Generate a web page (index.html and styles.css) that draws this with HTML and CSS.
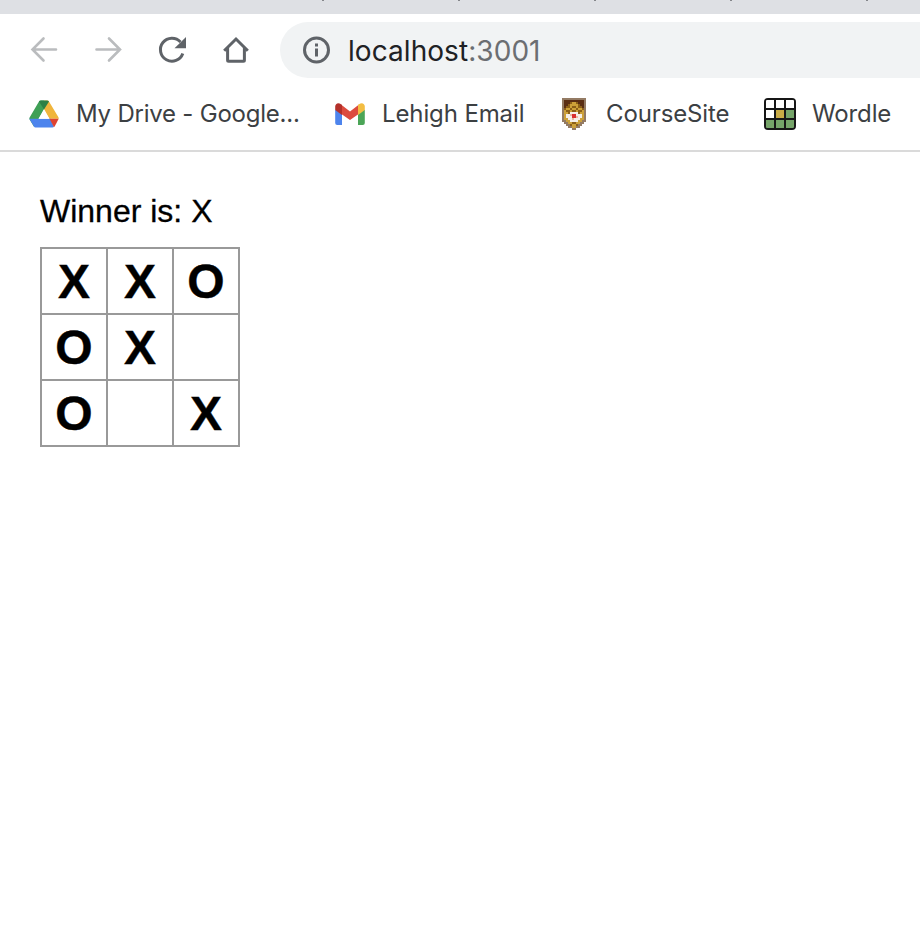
FILE: index.html
```html
<!DOCTYPE html>
<html lang="en">
<head>
<meta charset="utf-8">
<title>Tic Tac Toe</title>
<link rel="stylesheet" href="styles.css">
</head>
<body>
<div class="tabstrip"><i></i><i></i><i></i><i></i><i></i></div>
<header class="toolbar">
  <nav class="controls">
    <svg class="muted" width="28" height="28" viewBox="0 0 28 28"><path d="M26 13.500H2.500M13.500 2.500l-11 11 11 11"/></svg>
    <svg class="muted" width="28" height="28" viewBox="0 0 28 28"><path d="M2.500 13.500H26M15 2.500l11 11-11 11"/></svg>
    <svg class="strong" width="28" height="28" viewBox="0 0 28 28"><path d="M24.800 17.500A11.500 11.500 0 1 1 22.500 6"/><path class="solid" d="M28 1v11.200H16.500z"/></svg>
    <svg class="strong" width="28" height="28" viewBox="0 0 28 28"><path d="M2.200 14.800L14 3l11.800 11.800"/><path d="M5.600 12v12.300q0 1 1 1h14.800q1 0 1-1V12"/></svg>
  </nav>
  <div class="address">
    <svg class="info" width="28" height="28" viewBox="0 0 28 28"><circle cx="14.500" cy="14" r="12"/><path d="M14.500 12.600v8M14.500 7.500v3"/></svg>
    <span class="url">localhost<span class="port">:3001</span></span>
  </div>
</header>
<nav class="bookmarks">
  <a class="bookmark drive">
    <svg width="30" height="28" viewBox="0 0 30 28"><path fill="#3fa056" d="M10 1.500Q10.500.5 12 .5h3v8.500L5 26.800.6 19.500Q0 18.500.6 17.500z"/><path fill="#f0b53c" d="M15 .5h3q1.500 0 2 1L29.300 17q.6 1 .4 1.700H20.500L15 9z"/><path fill="#2c8045" d="M10 1.500Q10.500.5 12 .5h6q1.500 0 2 1L15 9.500z"/><path fill="#4d84ed" d="M.3 18.700H21.500L25 27.100q-.7.400-1.500.400H6.500Q5.500 27.500 4.800 26.300z"/><path fill="#de4332" d="M20.500 18.700h9.200L25.800 26.200q-.4.700-.9.900z"/><path fill="#fff" d="M15 9.800L20.200 18.700H9.800z"/></svg>
    <span>My Drive - Google...</span>
  </a>
  <a class="bookmark gmail">
    <svg width="30" height="22" viewBox="0 0 30 22"><path fill="#4d84ed" d="M.2 7H7v15H2.200q-2 0-2-2z"/><path fill="#4ba557" d="M23 7h6.800v13q0 2-2 2H23z"/><path fill="#dc4b3e" d="M6 1.500l9 7 9-7v9.300L15 17 6 10.800z"/><path fill="#b3302a" d="M.2 7V3.500C.2.500 3.300-.8 6 1.200L7 2v10z"/><path fill="#f3bd42" d="M29.800 7V3.500c0-3-3.100-4.300-5.800-2.300l-1 .8V12z"/></svg>
    <span>Lehigh Email</span>
  </a>
  <a class="bookmark course">
    <svg class="crest" width="24" height="32" viewBox="0 0 12 16"><path stroke="#947b64" d="M0 .5h12M0 1.500h1M11 1.500h1M0 2.500h1M11 2.500h1M0 3.500h1M11 3.500h1M0 4.500h1M11 4.500h1M0 5.500h1M11 5.500h1M0 6.500h1M11 6.500h1M0 7.500h1M11 7.500h1M0 8.500h1M11 8.500h1M0 9.500h1M11 9.500h1M0 10.500h1M11 10.500h1M0 11.500h2M10 11.500h2M1 12.500h2M9 12.500h2M2 13.500h2M8 13.500h2M3 14.500h2M7 14.500h2M5 15.500h2"/><path stroke="#5a2e14" d="M1 1.500h10M1 2.500h3M8 2.500h3M1 3.500h2M9 3.500h2M1 4.500h1M10 4.500h1"/><path stroke="#8c6018" d="M4 2.500h4M3 3.500h1M8 3.500h1M2 4.500h2M8 4.500h2M5 4.500h2M1 5.500h10M1 6.500h10M2 7.500h8"/><path stroke="#cda139" d="M5 2.500h2M4 3.500h4M4 4.500h1M7 4.500h1M2 5.500h2M5 5.500h2M8 5.500h2M1 6.500h1M4 6.500h1M7 6.500h1M10 6.500h1M1 7.500h2M9 7.500h2M1 8.500h1M10 8.500h1M1 9.500h1M10 9.500h1M1 10.500h2M9 10.500h2M2 11.500h2M8 11.500h2M3 12.500h6M4 13.500h4M5 14.500h2"/><path stroke="#f5eee7" d="M4 7.500h4M2 8.500h8M2 9.500h8M3 10.500h6M4 11.500h4"/><path stroke="#8c6018" d="M5 12.500h2M4 13.500h1M7 13.500h1"/><path stroke="#d92f30" d="M5 8.500h2M5 9.500h2"/><path stroke="#ecb7a2" d="M4 8.500h1M7 9.500h1M5 10.500h1"/></svg>
    <span>CourseSite</span>
  </a>
  <a class="bookmark wordle">
    <svg width="32" height="32" viewBox="0 0 32 32"><rect width="32" height="32" rx="4" fill="#171717"/><path fill="#fff" d="M2 3q0-1 1-1h7v8H2zM12 2h8v8h-8zM22 2h7q1 0 1 1v7h-8zM2 12h8v8H2z"/><path fill="#c9ac46" d="M12 12h8v8h-8z"/><path fill="#75a469" d="M22 12h8v8h-8zM2 22h8v8H3q-1 0-1-1zM12 22h8v8h-8zM22 22h8v7q0 1-1 1h-7z"/></svg>
    <span>Wordle</span>
  </a>
</nav>
<main class="game">
  <p class="status">Winner is: X</p>
  <div class="board">
    <button>X</button><button>X</button><button>O</button>
    <button>O</button><button>X</button><button></button>
    <button>O</button><button></button><button>X</button>
  </div>
</main>
</body>
</html>
```

FILE: styles.css
```css
* { box-sizing: border-box; }
body { margin: 0; background: #fff; font-family: Inter, sans-serif; overflow: hidden; }
svg { display: block; flex: none; }

.tabstrip { height: 14px; background: #dee0e4; display: flex; gap: 134px; padding-left: 322px; overflow: hidden; }
.tabstrip i { width: 2px; height: 1px; flex: none; background: #85878b; }

.toolbar { height: 72px; display: flex; align-items: center; }
.controls { width: 280px; flex: none; display: flex; gap: 36px; padding-left: 30px; }
.controls path { fill: none; stroke-width: 2.6; stroke-linecap: round; }
.controls .muted path { stroke: #babcbe; }
.controls .strong path { stroke: #5f6368; stroke-width: 3; stroke-linecap: butt; }
.controls .strong .solid { fill: #5f6368; stroke: none; }
.address { flex: 1; height: 56px; border-radius: 28px 0 0 28px; background: #f1f3f4; display: flex; align-items: center; padding-left: 22px; gap: 18px; }
.info { fill: none; stroke: #5f6368; stroke-width: 3; }
.url { padding-top: 1px; font-size: 28px; line-height: 34px; letter-spacing: 0.06px; color: #202124; white-space: nowrap; }
.port { color: #6b6e72; }

.bookmarks { height: 66px; border-bottom: 2px solid #dadada; display: flex; align-items: center; padding: 0 0 8px 29px; }
.bookmark { display: flex; align-items: center; font-size: 24px; line-height: 30px; letter-spacing: -0.12px; color: #3c4043; white-space: nowrap; flex: none; }
.drive { width: 306px; gap: 17px; letter-spacing: -0.22px; }
.gmail { width: 227px; gap: 17px; }
.course { width: 202px; gap: 20px; }
.wordle { gap: 16px; }
.crest { shape-rendering: crispEdges; stroke-width: 1; }

.game { padding: 40px; font-family: "Liberation Sans", sans-serif; color: #000; }
.status { margin: 0 0 16px; font-size: 32px; line-height: 39px; -webkit-text-stroke: 0.3px #000; }
.board { width: 200px; display: grid; grid-template-columns: repeat(3, 66px); }
.board button { width: 68px; height: 68px; margin: 0 -2px -2px 0; padding: 2px 0 0; border: 2px solid #999; background: #fff; color: #000; font: bold 48px/62px "Liberation Sans", sans-serif; text-align: center; -webkit-text-stroke: 0.4px #000; }
.board button:empty { padding: 0; }
```
